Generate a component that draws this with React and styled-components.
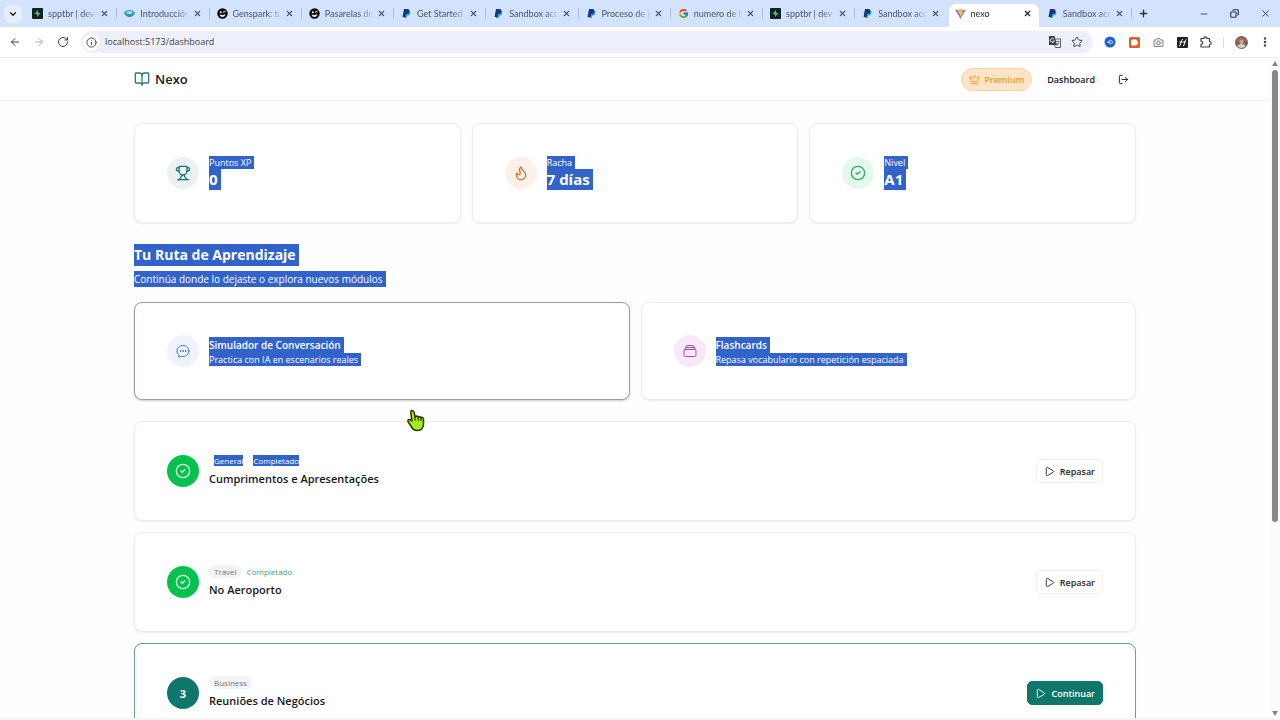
import React from "react";
import styled, { createGlobalStyle, css } from "styled-components";
import {
  ArrowLeft, ArrowRight, BookOpen, ChevronDown, CircleCheck, Copy, Crown,
  EllipsisVertical, Flame, Info, LogOut, Minus, Play, Plus, RotateCw,
  Star, Trophy, X,
} from "lucide-react";
import { HiOutlineChatBubbleOvalLeftEllipsis, HiOutlineRectangleStack } from "react-icons/hi2";
import { FcGoogle } from "react-icons/fc";

const GlobalStyle = createGlobalStyle`
  * { box-sizing: border-box; }
  body { margin: 0; background: #fff; color: #18181b; font-family: "Open Sans", "Noto Sans", sans-serif; }
  button, input { font: inherit; color: inherit; }
  button { border: 0; padding: 0; background: none; cursor: pointer; }
  a { color: inherit; text-decoration: none; }
  h1, h2, h3, p { margin: 0; }
  svg { display: block; flex: none; }
`;

/* Browser frame */

const Window = styled.div`
  display: flex;
  flex-direction: column;
  height: 100vh;
  overflow: hidden;
  border-bottom: 2px solid #f3f4f4;
`;

const TabStrip = styled.div`
  flex: none;
  display: flex;
  height: 27px;
  background: #d3e2fd;
`;

const TabSearch = styled.button`
  align-self: center;
  display: grid;
  place-items: center;
  width: 18px;
  height: 18px;
  margin: 0 3px 0 4px;
  border-radius: 6px;
  background: #e5eefe;
`;

const TabList = styled.div`
  flex: 1;
  min-width: 0;
  display: flex;
`;

const Tab = styled.div`
  flex: 1 1 0;
  min-width: 0;
  display: flex;
  align-items: center;
  gap: 5px;
  padding: 0 8px 0 7px;
  font-family: Lato, "Open Sans", sans-serif;
  font-size: 9px;
  color: #4c5468;
  background: linear-gradient(#aebfdd, #aebfdd) right center / 1px 11px no-repeat;
  ${(p) => p.$active && css`
    margin: 4px 1px 0 1px;
    padding: 0 7px 4px 6px;
    border-radius: 7px 7px 0 0;
    background: #fff;
    color: #1f2023;
  `}
  ${(p) => p.$plain && css`background: none;`}
`;

const TabTitle = styled.span`
  flex: 1;
  min-width: 0;
  overflow: hidden;
  white-space: nowrap;
  line-height: 14px;
  mask-image: linear-gradient(to right, #000 75%, #0003);
`;

const WindowButtons = styled.div`
  display: flex;
  align-items: center;
  width: 148px;
  color: #30343b;
`;

const FrameButton = styled.button`
  display: grid;
  place-items: center;
  width: ${(p) => p.$width || 24}px;
  height: 24px;
`;

const NewTabButton = styled(FrameButton)`
  margin-right: auto;
`;

const Toolbar = styled.div`
  flex: none;
  display: flex;
  align-items: center;
  height: 31px;
  padding: 0 3px;
  border-bottom: 1px solid #ececec;
  color: #3c4043;
`;

const AddressBar = styled.label`
  flex: 1;
  display: flex;
  align-items: center;
  gap: 5px;
  height: 22px;
  margin: 0 5px 0 6px;
  padding: 0 10px 0 2px;
  border-radius: 11px;
  background: #edf0fa;
`;

const SiteInfo = styled.span`
  display: grid;
  place-items: center;
  width: 17px;
  height: 17px;
  border-radius: 50%;
  background: #fff;
`;

const AddressInput = styled.input`
  flex: 1;
  min-width: 0;
  padding: 0;
  border: 0;
  outline: 0;
  background: none;
  font-size: 9px;
  line-height: 16px;
  color: #3c4043;
`;

const AddressIcons = styled.span`
  display: flex;
  gap: 10px;
`;

const ToolDivider = styled.span`
  width: 1px;
  height: 11px;
  margin: 0 5px;
  background: #d5dcea;
`;

const Viewport = styled.div`
  flex: 1;
  min-height: 0;
  display: flex;
`;

const Page = styled.div`
  position: relative;
  flex: 1;
  min-width: 0;
  overflow: hidden;
  background: #fefefe;
`;

const ScrollBar = styled.div`
  flex: none;
  display: flex;
  flex-direction: column;
  align-items: center;
  gap: 4px;
  width: 10px;
  padding: 3px 0 2px;
  background: #fcfcfc;
`;

const ScrollTrack = styled.div`
  flex: 1;
  width: 6px;
`;

const ScrollThumb = styled.div`
  height: 71%;
  border-radius: 3px;
  background: #888;
`;

/* Dashboard */

const Nav = styled.nav`
  height: 43px;
  border-bottom: 1px solid #f0f0f0;
  background: #fff;
`;

const Container = styled.div`
  max-width: 1002px;
  margin: 0 auto;
`;

const NavInner = styled(Container)`
  display: flex;
  align-items: center;
  justify-content: space-between;
  height: 100%;
`;

const Brand = styled.a`
  display: flex;
  align-items: center;
  gap: 5px;
  font-size: 13px;
  font-weight: 600;
  svg { color: #2f7d6c; }
`;

const NavLinks = styled.div`
  display: flex;
  align-items: center;
  font-size: 9px;
  font-weight: 600;
`;

const PremiumButton = styled.button`
  display: flex;
  align-items: center;
  gap: 4px;
  height: 23px;
  padding: 0 7px;
  margin-right: 15px;
  border: 1px solid #f8d3a6;
  border-radius: 12px;
  background: #fde3c8;
  color: #eba12e;
`;

const LogoutButton = styled.button`
  padding: 0 7px;
  margin-left: 16px;
`;

const Main = styled(Container).attrs({ as: "main" })`
  display: flex;
  flex-direction: column;
  gap: 21px;
  padding: 22px 0;
`;

const Grid = styled.section`
  display: grid;
  grid-template-columns: repeat(${(p) => p.$columns}, 1fr);
  gap: 11px;
`;

const Card = styled.article`
  display: flex;
  align-items: center;
  gap: 10px;
  padding: 32px;
  border: 1px solid ${(p) => p.$border || "#ececec"};
  border-radius: 8px;
  background: #fff;
  box-shadow: 0 1px 2px ${(p) => (p.$raised ? "#0003" : "#00000012")};
`;

const IconCircle = styled.span`
  flex: none;
  display: grid;
  place-items: center;
  width: 32px;
  height: 32px;
  border-radius: 50%;
  background: ${(p) => p.$background};
  color: ${(p) => p.$color};
  font-size: 11px;
  font-weight: 700;
`;

const TextStack = styled.div`
  flex: 1;
  min-width: 0;
  display: flex;
  flex-direction: column;
  align-items: flex-start;
`;

const selected = css`
  padding-right: 3px;
  background: #3163ca;
  color: #fff;
`;

const Caption = styled.p`
  font-size: 9px;
  line-height: 13px;
  ${selected}
`;

const StatValue = styled.p`
  font-size: 15px;
  font-weight: 700;
  line-height: 21px;
  ${selected}
`;

const SectionHeader = styled.header`
  display: flex;
  flex-direction: column;
  align-items: flex-start;
  gap: 5px;
  margin-bottom: -6px;
`;

const SectionTitle = styled.h1`
  font-size: 14px;
  font-weight: 700;
  line-height: 22px;
  ${selected}
`;

const SectionText = styled.p`
  font-size: 10px;
  line-height: 16px;
  ${selected}
`;

const FeatureTitle = styled.h2`
  font-size: 10px;
  font-weight: 600;
  line-height: 16px;
  ${selected}
`;

const ModuleList = styled.section`
  display: flex;
  flex-direction: column;
  gap: 11px;
`;

const BadgeRow = styled.div`
  display: flex;
  align-items: center;
  gap: 5px;
  height: 13px;
  font-size: 8px;
  line-height: 11px;
`;

const Badge = styled.span`
  padding: 1px 5px;
  border-radius: 7px;
  background: ${(p) => (p.$selected ? "transparent" : "#f4f4f6")};
  color: #71717a;
`;

const Status = styled.span`
  color: #3fa565;
`;

const Highlight = styled.span`
  display: inline-block;
  background: #3163ca;
  color: #fff;
`;

const ModuleTitle = styled.h3`
  margin-top: 3px;
  font-size: 11px;
  font-weight: 600;
  line-height: 18px;
`;

const ActionButton = styled.button`
  display: flex;
  align-items: center;
  gap: 5px;
  height: 24px;
  padding: 0 7px;
  border: 1px solid ${(p) => (p.$primary ? "#0f766b" : "#eeeeee")};
  border-radius: 5px;
  background: ${(p) => (p.$primary ? "#0f766b" : "#fff")};
  color: ${(p) => (p.$primary ? "#fff" : "#27272a")};
  font-size: 9px;
  font-weight: 600;
`;

const Pointer = styled.svg`
  position: absolute;
  left: 406px;
  top: 351px;
  pointer-events: none;
`;

/* Favicons and toolbar drawings */

const Supabase = () => (
  <svg width="11" height="11" viewBox="0 0 11 11">
    <rect width="11" height="11" rx="1" fill="#12221c" />
    <path d="M6 2 2.500 6H5v3l3.500-4H6z" fill="#3ecf8e" />
  </svg>
);

const Moodle = () => (
  <svg width="11" height="11" viewBox="0 0 11 11">
    <ellipse cx="5.500" cy="5" rx="5.500" ry="3" fill="#35a5c6" />
    <path d="M1 6c2 2 7 2 9 0-1 4-8 4-9 0z" fill="#277d9e" />
    <ellipse cx="5.500" cy="4.500" rx="3" ry="1.200" fill="#b9e6f2" />
  </svg>
);

const Genspark = () => (
  <svg width="11" height="11" viewBox="0 0 11 11">
    <circle cx="5.500" cy="5.500" r="5.200" fill="#0b0b0d" />
    <circle cx="3.800" cy="4.300" r="1" fill="#fff" />
    <path d="m6 4.300 2.500-1" stroke="#fff" />
    <path d="M2.500 6.500q3 1 6-.5Q8 9 5.500 9T2.500 6.500z" fill="#e8e8ea" />
  </svg>
);

const PayPal = () => (
  <svg width="11" height="11" viewBox="0 0 11 11">
    <path d="M4 3h4.500Q10 4 9 6T6 7.500L5.500 10H3z" fill="#1c9bde" />
    <path d="M3 1h4q2 .5 1.500 2.800T5 6L4.300 9H1.500z" fill="#15377f" />
  </svg>
);

const Vite = () => (
  <svg width="11" height="11" viewBox="0 0 11 11">
    <path d="M0 1.500 5.500 11 11 1.500 5.500 2.500z" fill="#8a7bd8" />
    <path d="M3.500 1 7.500.5 7 4l1 .2L5.500 9 4.800 5.500 3.500 5z" fill="#f3c13a" />
  </svg>
);

const Translate = () => (
  <svg width="12" height="12" viewBox="0 0 12 12">
    <path d="M6 3h5.500v8.500H6.500L5.500 9" fill="#fff" stroke="#5a5e63" />
    <path d="M7 5.500h3.500M8.800 4.500v1M7.500 9.500Q9.800 8 10 5.500M7.800 7l2 2.500" fill="none" stroke="#5a5e63" strokeWidth=".8" />
    <path d="M0 0h5.500l2.500 9H0z" fill="#3c4043" />
    <path d="M5 3.200A2 2 0 1 0 5.300 5H3.700" fill="none" stroke="#fff" strokeWidth=".9" />
  </svg>
);

const BlueExtension = () => (
  <svg width="12" height="12" viewBox="0 0 12 12">
    <circle cx="6" cy="6" r="5.500" fill="#2260c9" />
    <path d="M2.500 6 7 3.500v5z" fill="#9cc8fb" />
    <circle cx="7" cy="6" r="2" fill="#9cc8fb" />
    <circle cx="7" cy="6" r="1" fill="#2260c9" />
  </svg>
);

const OrangeExtension = () => (
  <svg width="11" height="11" viewBox="0 0 11 11">
    <rect width="11" height="11" rx="1.500" fill="#d9622b" />
    <rect x="2" y="2.500" width="6" height="6" rx="1.500" fill="#fff" />
    <path d="m7.500 5 1.500-1v3.500l-1.500-1z" fill="#fff" />
  </svg>
);

const CameraExtension = () => (
  <svg width="11" height="11" viewBox="0 0 11 11">
    <path d="M1 3h2l1-1.500h3L8 3h2v6.500H1z" fill="#e4e5e6" stroke="#8b8e92" strokeLinejoin="round" />
    <circle cx="5.500" cy="6" r="1.700" fill="#fff" stroke="#77797d" />
  </svg>
);

const FontExtension = () => (
  <svg width="11" height="11" viewBox="0 0 11 11">
    <rect width="11" height="11" rx="1" fill="#222" />
    <path d="M2 9Q3.500 9 3.800 6T6 2M2.500 5h3M6 9q1.300 0 1.500-3T9.500 2.500M6 5h3" stroke="#fff" fill="none" />
  </svg>
);

const ExtensionsIcon = () => (
  <svg width="12" height="12" viewBox="0 0 12 12">
    <path
      d="M1 2.500h3Q4 .8 5.500.8T7 2.500h2.500v3q1.700 0 1.700 1.500T9.500 8.500V11H1V8.300Q2.800 8.200 2.800 6.800T1 5.200z"
      fill="none" stroke="currentColor" strokeWidth="1.200" strokeLinejoin="round"
    />
  </svg>
);

const Avatar = () => (
  <svg width="13" height="13" viewBox="0 0 13 13">
    <circle cx="6.500" cy="6.500" r="6.500" fill="#77635a" />
    <path d="M2 5q1-3 4.500-3T11 5z" fill="#b26d5f" />
    <circle cx="6.500" cy="6" r="2.200" fill="#c9a28c" />
    <path d="M2 10q4.500-4 9 0-4.500 4-9 0" fill="#d8d2c7" />
  </svg>
);

const ScrollArrow = ({ down }) => (
  <svg width="6" height="5" viewBox="0 0 6 5">
    <path d={down ? "M0 0h6L3 5z" : "M0 5h6L3 0z"} fill="#858585" />
  </svg>
);

const Google = () => <FcGoogle size={11} />;

const tabs = [
  { title: "spptbr | dev", Icon: Supabase },
  { title: "Introducción", Icon: Moodle },
  { title: "Genspark: tu", Icon: Genspark },
  { title: "Pasarelas de", Icon: Genspark },
  { title: "Get Started", Icon: PayPal },
  { title: "Sandbox acc", Icon: PayPal },
  { title: "Proceso de p", Icon: PayPal },
  { title: "numero de t", Icon: Google },
  { title: "spptbr | dev", Icon: Supabase },
  { title: "Sandbox acc", Icon: PayPal, plain: true },
  { title: "nexo", Icon: Vite, active: true },
  { title: "Sandbox acc", Icon: PayPal },
];

const stats = [
  { label: "Puntos XP", value: "0", Icon: Trophy, background: "#edf1f3", color: "#16796a" },
  { label: "Racha", value: "7 días", Icon: Flame, background: "#fdf0ea", color: "#d5742b" },
  { label: "Nivel", value: "A1", Icon: CircleCheck, background: "#e3f9ec", color: "#36ac68" },
];

const features = [
  {
    title: "Simulador de Conversación",
    text: "Practica con IA en escenarios reales",
    Icon: HiOutlineChatBubbleOvalLeftEllipsis,
    background: "#f0f2fd",
    color: "#3f7cb8",
    hovered: true,
  },
  {
    title: "Flashcards",
    text: "Repasa vocabulario con repetición espaciada",
    Icon: HiOutlineRectangleStack,
    background: "#f6eafa",
    color: "#ae45b8",
  },
];

const modules = [
  { title: "Cumprimentos e Apresentações", category: "General", done: true, selected: true },
  { title: "No Aeroporto", category: "Travel", done: true },
  { title: "Reuniões de Negócios", category: "Business" },
];

function BrowserChrome() {
  return (
    <>
      <TabStrip>
        <TabSearch aria-label="Buscar pestañas"><ChevronDown size={10} strokeWidth={3} /></TabSearch>
        <TabList>
          {tabs.map(({ title, Icon, active, plain }, i) => (
            <Tab key={i} $active={active} $plain={plain}>
              <Icon />
              <TabTitle>{title}</TabTitle>
              <button aria-label="Cerrar pestaña"><X size={9} strokeWidth={3} /></button>
            </Tab>
          ))}
        </TabList>
        <WindowButtons>
          <NewTabButton $width={22} aria-label="Nueva pestaña"><Plus size={11} strokeWidth={3} /></NewTabButton>
          <FrameButton $width={30} aria-label="Minimizar"><Minus size={10} /></FrameButton>
          <FrameButton $width={31} aria-label="Restaurar"><Copy size={9} strokeWidth={3} transform="scale(-1 1)" /></FrameButton>
          <FrameButton $width={30} aria-label="Cerrar"><X size={11} /></FrameButton>
        </WindowButtons>
      </TabStrip>
      <Toolbar>
        <FrameButton aria-label="Atrás"><ArrowLeft size={12} strokeWidth={2} /></FrameButton>
        <FrameButton aria-label="Adelante"><ArrowRight size={12} color="#a9abae" /></FrameButton>
        <FrameButton aria-label="Recargar"><RotateCw size={12} strokeWidth={2} /></FrameButton>
        <AddressBar>
          <SiteInfo><Info size={11} /></SiteInfo>
          <AddressInput aria-label="Dirección" defaultValue="localhost:5173/dashboard" />
          <AddressIcons><Translate /><Star size={12} /></AddressIcons>
        </AddressBar>
        <FrameButton aria-label="Extensión azul"><BlueExtension /></FrameButton>
        <FrameButton aria-label="Grabador"><OrangeExtension /></FrameButton>
        <FrameButton aria-label="Captura"><CameraExtension /></FrameButton>
        <FrameButton aria-label="Tipografías"><FontExtension /></FrameButton>
        <FrameButton aria-label="Extensiones"><ExtensionsIcon /></FrameButton>
        <ToolDivider />
        <FrameButton aria-label="Perfil"><Avatar /></FrameButton>
        <FrameButton aria-label="Menú"><EllipsisVertical size={12} strokeWidth={3} /></FrameButton>
      </Toolbar>
    </>
  );
}

export default function App() {
  return (
    <Window>
      <GlobalStyle />
      <BrowserChrome />
      <Viewport>
        <Page>
          <Nav>
            <NavInner>
              <Brand href="#"><BookOpen size={16} />Nexo</Brand>
              <NavLinks>
                <PremiumButton><Crown size={11} />Premium</PremiumButton>
                <a href="#dashboard">Dashboard</a>
                <LogoutButton aria-label="Salir"><LogOut size={11} /></LogoutButton>
              </NavLinks>
            </NavInner>
          </Nav>
          <Main>
            <Grid $columns={3}>
              {stats.map(({ label, value, Icon, background, color }) => (
                <Card key={label}>
                  <IconCircle $background={background} $color={color}><Icon size={16} /></IconCircle>
                  <TextStack>
                    <Caption>{label}</Caption>
                    <StatValue>{value}</StatValue>
                  </TextStack>
                </Card>
              ))}
            </Grid>
            <SectionHeader>
              <SectionTitle>Tu Ruta de Aprendizaje</SectionTitle>
              <SectionText>Continúa donde lo dejaste o explora nuevos módulos</SectionText>
            </SectionHeader>
            <Grid $columns={2}>
              {features.map(({ title, text, Icon, background, color, hovered }) => (
                <Card key={title} $border={hovered && "#8fa39f"} $raised={hovered}>
                  <IconCircle $background={background} $color={color}><Icon size={16} /></IconCircle>
                  <TextStack>
                    <FeatureTitle>{title}</FeatureTitle>
                    <Caption>{text}</Caption>
                  </TextStack>
                </Card>
              ))}
            </Grid>
            <ModuleList>
              {modules.map(({ title, category, done, selected: marked }, i) => (
                <Card key={title} $border={!done && "#6f9d94"}>
                  <IconCircle $background={done ? "#05c24e" : "#0f766b"} $color={done ? "#d9ffe6" : "#fff"}>
                    {done ? <CircleCheck size={16} /> : i + 1}
                  </IconCircle>
                  <TextStack>
                    <BadgeRow>
                      <Badge $selected={marked}>{marked ? <Highlight>{category}</Highlight> : category}</Badge>
                      {done && <Status>{marked ? <Highlight>Completado</Highlight> : "Completado"}</Status>}
                    </BadgeRow>
                    <ModuleTitle>{title}</ModuleTitle>
                  </TextStack>
                  <ActionButton $primary={!done}>
                    <Play size={11} />{done ? "Repasar" : "Continuar"}
                  </ActionButton>
                </Card>
              ))}
            </ModuleList>
          </Main>
          <Pointer width="19" height="23" viewBox="0 0 19 23">
            <path
              d="M7 2Q5 .5 4.800 3l1 9-2-1.500Q1.500 10 2 12.500l4.500 7Q8 21.500 11 21.500q6 0 6.500-6V9.500Q16.500 7.500 15 9q-.7-2-2.700-.8Q11 6.500 9 7.500L8 3z"
              fill="#a6ec17" stroke="#26330c" strokeWidth="1.500" strokeLinejoin="round"
            />
            <path d="M9 7.500v4M12.300 8.200v3.500M15 9v3" stroke="#26330c" strokeWidth="1.200" />
          </Pointer>
        </Page>
        <ScrollBar>
          <ScrollArrow />
          <ScrollTrack><ScrollThumb /></ScrollTrack>
          <ScrollArrow down />
        </ScrollBar>
      </Viewport>
    </Window>
  );
}
